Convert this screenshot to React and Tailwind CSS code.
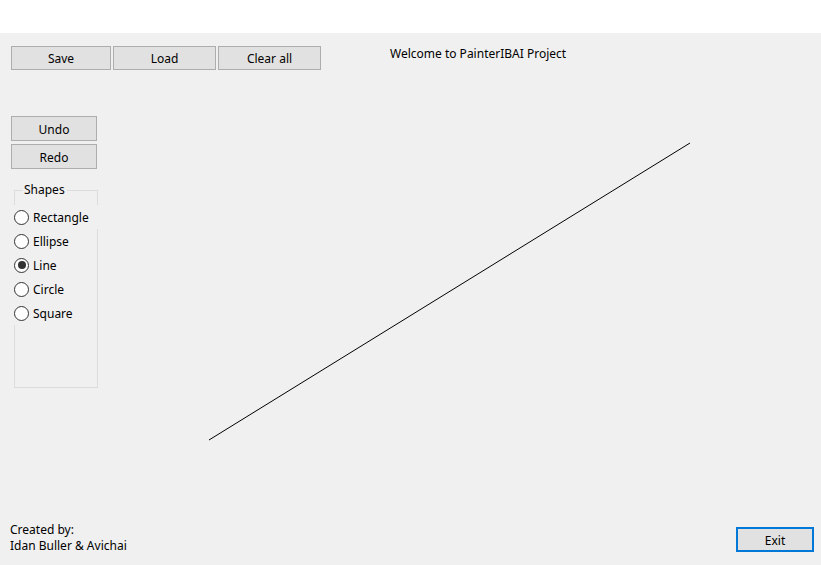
import React from 'react'

const font = { fontFamily: '"Noto Sans", "Liberation Sans", sans-serif' }

function WinButton({ children, className = '' }) {
  return (
    <button
      className={`h-[24px] bg-[#e1e1e1] border border-[#adadad] text-[12px] leading-none text-black flex items-center justify-center pt-[2px] ${className}`}
    >
      {children}
    </button>
  )
}

function Radio({ label, checked, className = '' }) {
  return (
    <label className={`flex items-center h-[24px] bg-[#f0f0f0] ml-[-1px] ${className}`}>
      <span className="w-[15px] h-[15px] rounded-full border border-[#333333] bg-white flex items-center justify-center shrink-0">
        {checked && <span className="w-[8px] h-[8px] rounded-full bg-[#333333]" />}
      </span>
      <span className="ml-[4px] pt-[1px] text-[12px] leading-[16px] text-black pr-[2px]">{label}</span>
    </label>
  )
}

export default function App() {
  const shapes = ['Rectangle', 'Ellipse', 'Line', 'Circle', 'Square']

  return (
    <div className="relative w-[821px] h-[565px] bg-white flex flex-col overflow-hidden" style={font}>
      <div className="h-[33px] bg-white shrink-0" />
      <div className="flex-1 bg-[#f0f0f0] flex flex-col">
        {/* top toolbar */}
        <div className="flex items-start pl-[11px] pt-[13px]">
          <WinButton className="w-[100px]">Save</WinButton>
          <WinButton className="w-[103px] ml-[2px]">Load</WinButton>
          <WinButton className="w-[103px] ml-[2px]">Clear all</WinButton>
          <div className="ml-[69px] text-[12px] leading-[16px] text-black">Welcome to PainterIBAI Project</div>
        </div>

        {/* left tools */}
        <div className="flex flex-col pl-[11px] mt-[46px]">
          <WinButton className="w-[86px] h-[25px]">Undo</WinButton>
          <WinButton className="w-[86px] h-[25px] mt-[3px]">Redo</WinButton>

          <fieldset className="ml-[3px] mt-[13px] w-[84px] min-w-0 h-[206px] border border-[#dcdcdc]">
            <legend className="ml-[7px] px-[2px] text-[12px] leading-[16px] text-black">Shapes</legend>
            <div className="flex flex-col mt-[7px]">
              {shapes.map((s) => (
                <Radio
                  key={s}
                  label={s}
                  checked={s === 'Line'}
                  className={s === 'Rectangle' ? 'w-[90px]' : 'w-fit'}
                />
              ))}
            </div>
          </fieldset>
        </div>

        <div className="flex-1" />

        {/* footer */}
        <div className="flex items-end justify-between pl-[10px] pr-[7px] pb-[12px]">
          <div className="text-[12px] leading-[16px] text-black mb-[-1px]">
            <div>Created by:</div>
            <div>Idan Buller &amp; Avichai</div>
          </div>
          <button className="w-[78px] h-[25px] bg-[#e1e1e1] border-2 border-[#0078d7] text-[12px] leading-none text-black pt-[2px] mb-[1px]">
            Exit
          </button>
        </div>
      </div>

      {/* drawing canvas */}
      <svg className="absolute left-0 top-0 pointer-events-none" width="821" height="565">
        <line x1="209" y1="440" x2="690" y2="143" stroke="#000" strokeWidth="1" />
      </svg>
    </div>
  )
}
